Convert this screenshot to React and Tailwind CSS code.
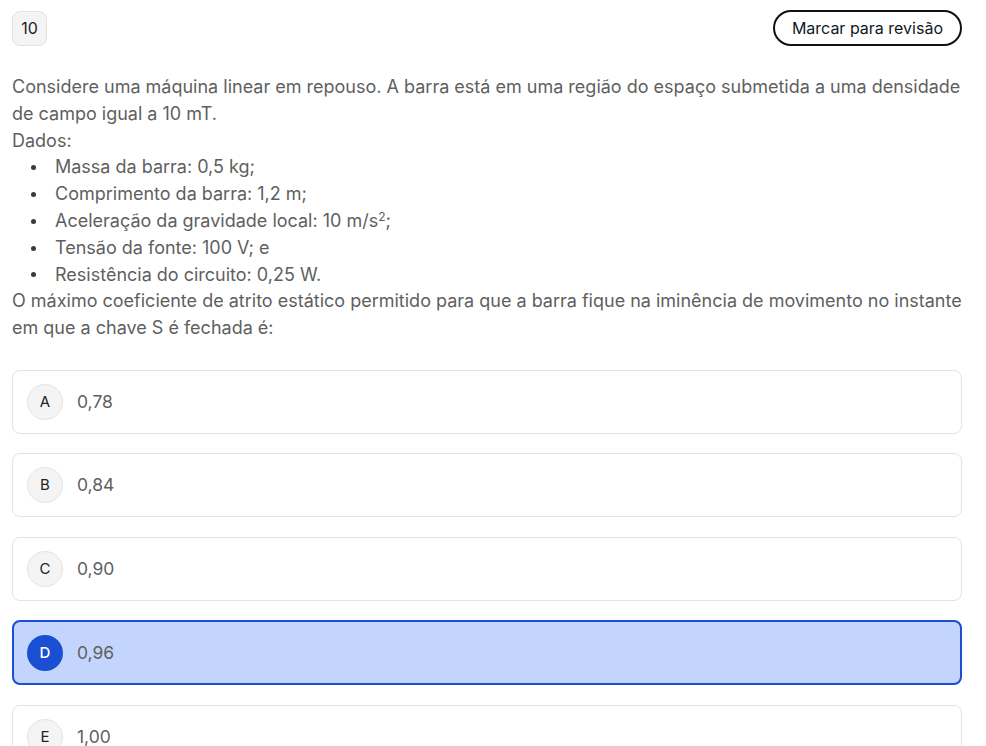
import { useState } from 'react';

const options = [
  { letter: 'A', value: '0,78' },
  { letter: 'B', value: '0,84' },
  { letter: 'C', value: '0,90' },
  { letter: 'D', value: '0,96' },
  { letter: 'E', value: '1,00' },
];

const dados = [
  'Massa da barra: 0,5 kg;',
  'Comprimento da barra: 1,2 m;',
  null,
  'Tensão da fonte: 100 V; e',
  'Resistência do circuito: 0,25 W.',
];

function Bullet({ children }) {
  return (
    <li className="flex items-center">
      <span className="ml-[19px] mr-[19px] h-[5px] w-[5px] shrink-0 rounded-full bg-[#3a3a3a]" />
      <span>{children}</span>
    </li>
  );
}

export default function App() {
  const [selected, setSelected] = useState('D');

  return (
    <div className="min-h-screen bg-white pl-3 pr-6 pt-[10px] font-['Inter',sans-serif] text-[#5f5f5f]">
      <div className="flex items-center justify-between">
        <div className="flex h-[35px] w-[35px] items-center justify-center rounded-lg border border-[#e2e2e2] bg-[#f4f4f4] text-base text-[#222]">
          10
        </div>
        <button className="h-[36px] rounded-full border-2 border-[#111] px-[17px] text-base text-[#111827]">
          Marcar para revisão
        </button>
      </div>

      <div className="mr-[-10px] mt-[28px] text-[18px] leading-[26.8px] text-[#5f5f5f]">
        <p>
          Considere uma máquina linear em repouso. A barra está em uma região do espaço submetida a uma densidade de campo
          igual a 10 mT.
        </p>
        <p>Dados:</p>
        <ul>
          {dados.map((d, i) =>
            d ? (
              <Bullet key={i}>{d}</Bullet>
            ) : (
              <Bullet key={i}>
                Aceleração da gravidade local: 10 m/s<sup className="text-[12px]">2</sup>;
              </Bullet>
            )
          )}
        </ul>
        <p>
          O máximo coeficiente de atrito estático permitido para que a barra fique na iminência de movimento no instante em
          que a chave S é fechada é:
        </p>
      </div>

      <div className="mt-[28px] flex flex-col gap-[19.5px]">
        {options.map((o) => {
          const active = selected === o.letter;
          return (
            <button
              key={o.letter}
              onClick={() => setSelected(o.letter)}
              className={
                active
                  ? 'flex h-[65px] items-center gap-[14px] rounded-lg border-2 border-[#1a4fd1] bg-[#c4d5fd] px-[13px] text-left'
                  : 'flex h-[64px] items-center gap-[14px] rounded-lg border border-[#e3e3e3] bg-white px-[14px] text-left'
              }
            >
              <span
                className={
                  active
                    ? 'flex h-[36px] w-[36px] items-center justify-center rounded-full bg-[#1a4fd1] text-[15px] font-medium text-white'
                    : 'flex h-[36px] w-[36px] items-center justify-center rounded-full border border-[#e3e3e3] bg-[#f4f4f4] text-[15px] text-[#222]'
                }
              >
                {o.letter}
              </span>
              <span className="text-[17.5px] text-[#5f5f5f]">{o.value}</span>
            </button>
          );
        })}
      </div>
    </div>
  );
}
